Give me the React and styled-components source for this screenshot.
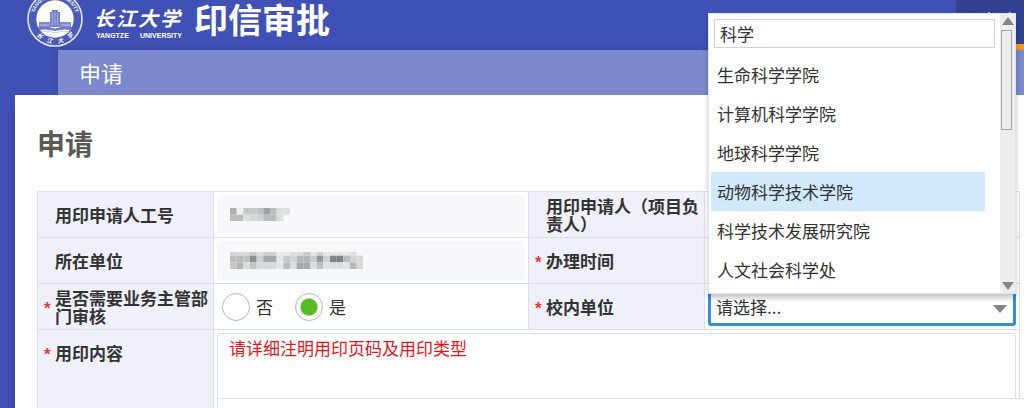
import React, { useState } from 'react'
import styled, { createGlobalStyle } from 'styled-components'

const departments = [
    '生命科学学院',
    '计算机科学学院',
    '地球科学学院',
    '动物科学技术学院',
    '科学技术发展研究院',
    '人文社会科学处',
]

// grey levels of the masked values, one array per row of blocks
const maskedId = [
    ['b0', 'f0', 'c8', 'c8', 'c0', 'a0', 'bc', 'dd', 'df'],
    ['bc', 'bc', 'de', 'd4', 'cf', 'bc', 'bc', 'dd', ''],
]

const maskedUnit = [
    ['d4', 'd8', 'd8', 'c8', 'dd', 'd0', 'd0', 'ea', 'ea', 'dc', 'dc', 'c8', 'e4', 'd0', 'e6', 'e6', 'e6', 'ec', 'e2', ''],
    ['bc', 'bc', 'c0', '90', 'd0', 'a8', 'a8', 'e4', 'c8', 'd4', 'b8', 'b8', 'cc', '98', 'd0', '84', '84', 'bc', 'd4', 'd8'],
    ['c8', 'b4', 'dc', 'c4', 'd8', 'd8', 'd8', 'e4', 'bc', 'dc', 'a8', 'a8', 'dc', 'c0', 'e0', 'dc', 'dc', 'e4', 'b8', 'd8'],
]

function Mosaic({ rows, heights }) {
    const total = heights.reduce((a, b) => a + b, 0)
    const width = rows[0].length * 20
    let y = 0
    return (
        <svg width={width / 3} height={total / 3} viewBox={`0 0 ${width} ${total}`} aria-hidden="true">
            {rows.map((row, r) => {
                const top = y
                y += heights[r]
                return row.map((c, i) => c && (
                    <rect key={`${r}-${i}`} x={i * 20} y={top} width="20" height={heights[r]} fill={`#${c}${c}${c}`} />
                ))
            })}
        </svg>
    )
}

function Seal() {
    return (
        <svg width="56" height="47" viewBox="0 9 56 47" aria-hidden="true">
            <defs>
                <path id="ringTop" d="M 6.5 31 A 21.7 21.7 0 1 1 49.5 31" />
                <path id="ringBottom" d="M 6 39 A 24.6 24.6 0 0 0 50 39" />
            </defs>
            <circle cx="28" cy="28" r="27" fill="#4a5bba" stroke="#dfe3f8" strokeWidth="1.6" />
            <circle cx="28" cy="28" r="18.7" fill="#fff" />
            <text fill="#fff" fontFamily="Liberation Sans, sans-serif" fontSize="5" fontWeight="700">
                <textPath href="#ringTop" startOffset="50%" textAnchor="middle">YANGTZE UNIVERSITY</textPath>
            </text>
            <text fill="#fff" fontFamily="Noto Sans CJK SC, sans-serif" fontSize="6" fontStyle="italic" fontWeight="700">
                <textPath href="#ringBottom" startOffset="50%" textAnchor="middle">{'长\u2002\u2002江\u2002\u2002大\u2002\u2002学'}</textPath>
            </text>
            <path d="M25 19h6v2h2v15h-10v-15h2z" fill="#7684cc" />
            <path d="M25.500 22v12M28 21v13M30.500 22v12" stroke="#a9b2e2" strokeWidth="0.8" />
            <path d="M12 31h11v6h-11zM33 31h11v6h-11z" fill="#7e8bd0" />
            <path d="M13 34h9M34 34h9" stroke="#c7cdee" strokeWidth="0.8" />
            <path d="M11 36q8.500 -1 17 1.500q8.500 -2.500 17 -1.500l-1 3q-8 -1.500 -16 1q-8 -2.500 -16 -1z" fill="#6b7ac8" />
            <path d="M14 41q7 -2 14 1q7 -3 14 -1" stroke="#bac2ea" strokeWidth="0.8" fill="none" />
        </svg>
    )
}

function Arrow({ up, size }) {
    return (
        <svg width={size} height="8" viewBox="0 0 14 8" preserveAspectRatio="none" aria-hidden="true">
            <path d={up ? 'M0 8L7 0L14 8z' : 'M0 0H14L7 8z'} fill="#868686" />
        </svg>
    )
}

function DepartmentPicker() {
    const [query, setQuery] = useState('科学')
    const [active, setActive] = useState('动物科学技术学院')

    return (
        <Picker>
            <Select id="dept" defaultValue="">
                <option value="">请选择...</option>
            </Select>
            <SelectArrow><Arrow size={14} /></SelectArrow>
            <Popup>
                <PopupBody>
                    <Search aria-label="搜索" value={query} onChange={e => setQuery(e.target.value)} />
                    <Options>
                        {departments.map(d => (
                            <li key={d}>
                                <Option type="button" $active={d === active} onClick={() => setActive(d)}>{d}</Option>
                            </li>
                        ))}
                    </Options>
                </PopupBody>
                <ScrollTrack>
                    <ScrollButton type="button" aria-label="向上"><Arrow up size={12} /></ScrollButton>
                    <ScrollThumb />
                    <ScrollButton type="button" aria-label="向下"><Arrow size={12} /></ScrollButton>
                </ScrollTrack>
            </Popup>
        </Picker>
    )
}

function FieldLabel({ children, required, top, htmlFor }) {
    return (
        <LabelCell $top={top}>
            <Star>{required && '*'}</Star>
            <label htmlFor={htmlFor}>{children}</label>
        </LabelCell>
    )
}

export default function App() {
    const [review, setReview] = useState('yes')

    return (
        <Page>
            <GlobalStyle />
            <Header>
                <Seal />
                <School>
                    <SchoolName><span>长</span><span>江</span><span>大</span><span>学</span></SchoolName>
                    <SchoolLatin><span>YANGTZE</span><span>UNIVERSITY</span></SchoolLatin>
                </School>
                <SystemName>印信审批</SystemName>
                <NavItem href="#apply">申请</NavItem>
            </Header>
            <TabBar>申请</TabBar>
            <Panel>
                <Title>申请</Title>
                <Form>
                    <Row>
                        <FieldLabel htmlFor="jobId">用印申请人工号</FieldLabel>
                        <Cell><Locked id="jobId"><Mosaic rows={maskedId} heights={[20, 20]} /></Locked></Cell>
                        <FieldLabel>用印申请人（项目负责人）</FieldLabel>
                        <Cell />
                    </Row>
                    <Row>
                        <FieldLabel htmlFor="unit">所在单位</FieldLabel>
                        <Cell><Locked id="unit"><Mosaic rows={maskedUnit} heights={[11, 20, 20]} /></Locked></Cell>
                        <FieldLabel required>办理时间</FieldLabel>
                        <Cell />
                    </Row>
                    <Row>
                        <FieldLabel required>是否需要业务主管部门审核</FieldLabel>
                        <RadioCell>
                            <RadioLabel>
                                <Radio name="review" checked={review === 'no'} onChange={() => setReview('no')} />否
                            </RadioLabel>
                            <RadioLabel>
                                <Radio name="review" checked={review === 'yes'} onChange={() => setReview('yes')} />是
                            </RadioLabel>
                        </RadioCell>
                        <FieldLabel required htmlFor="dept">校内单位</FieldLabel>
                        <Cell><DepartmentPicker /></Cell>
                    </Row>
                    <ContentRow>
                        <FieldLabel required top htmlFor="content">用印内容</FieldLabel>
                        <ContentCell>
                            <Content id="content" defaultValue="请详细注明用印页码及用印类型" />
                            <ContentFoot />
                        </ContentCell>
                    </ContentRow>
                </Form>
            </Panel>
        </Page>
    )
}

const GlobalStyle = createGlobalStyle`
    * {
        box-sizing: border-box;
    }

    body {
        margin: 0;
        overflow-x: hidden;
        font-family: "Noto Sans CJK SC", sans-serif;
        font-size: 17px;
        color: #333;
    }

    input, select, textarea, button {
        font: inherit;
        color: inherit;
    }
`

const Page = styled.div`
    display: flex;
    flex-direction: column;
    min-height: 100vh;
    background: #3f51b5;
`

const Header = styled.header`
    display: flex;
    align-items: flex-start;
    height: 50px;
    padding-left: 27px;
`

const School = styled.div`
    width: 90px;
    margin-left: 11px;
    color: #fff;
`

const SchoolName = styled.div`
    display: flex;
    justify-content: space-between;
    padding: 4px 4px 0 0;
    font-size: 20px;
    font-style: italic;
    font-weight: 700;
    line-height: 28px;
`

const SchoolLatin = styled.div`
    display: flex;
    justify-content: space-between;
    padding: 0 2px;
    font-family: "Liberation Sans", sans-serif;
    font-size: 7px;
    font-weight: 700;
    line-height: 8px;
`

const SystemName = styled.div`
    margin-left: 10px;
    color: #fff;
    font-size: 34px;
    font-weight: 700;
    line-height: 38px;
`

const NavItem = styled.a`
    width: 68px;
    height: 50px;
    margin-left: auto;
    padding-left: 24px;
    border-bottom: 6px solid #f5a01d;
    background: #32418f;
    color: #fff;
    font-size: 18px;
    line-height: 40px;
    text-decoration: none;
`

const TabBar = styled.div`
    height: 45px;
    margin-left: 58px;
    padding-left: 21px;
    background: #7b88cb;
    box-shadow: 0 0 8px rgba(0, 0, 0, 0.16);
    color: #fff;
    font-size: 22px;
    line-height: 44px;
`

const Panel = styled.main`
    position: relative;
    display: flex;
    flex: 1;
    flex-direction: column;
    margin-left: 15px;
    padding: 0 4px 0 22px;
    background: #fff;
    box-shadow: 0 6px 8px rgba(0, 0, 0, 0.2);
`

const Title = styled.h1`
    margin: 0;
    color: #595959;
    font-size: 28px;
    font-weight: 700;
    line-height: 96px;
`

const Form = styled.form`
    display: flex;
    flex: 1;
    flex-direction: column;
    border: 1px solid #dcdeea;
    border-bottom: 0;
`

const Row = styled.div`
    display: grid;
    grid-template-columns: 176px 1fr 177px 1fr;
    height: 46px;
    border-bottom: 1px solid #dcdeea;
`

const ContentRow = styled(Row)`
    flex: 1;
    grid-template-columns: 176px 1fr;
    height: auto;
    border-bottom: 0;
`

const LabelCell = styled.div`
    display: flex;
    align-items: ${props => props.$top ? 'flex-start' : 'center'};
    padding: ${props => props.$top ? '14px' : '0'} 4px 0 6px;
    border-right: 1px solid #dcdeea;
    background: #eff0fa;
    font-weight: 700;
    line-height: 18px;

    &:nth-child(3) {
        border-left: 1px solid #dcdeea;
    }
`

const Star = styled.span`
    flex: 0 0 11px;
    height: 18px;
    color: #e5393c;
    font-family: "Liberation Sans", sans-serif;
    font-size: 17px;
    font-weight: 700;
    line-height: 22px;
`

const Cell = styled.div`
    padding: 3px;
`

const Locked = styled.output`
    display: flex;
    align-items: center;
    height: 39px;
    padding-left: 13px;
    border-radius: 3px;
    background: #f7f8fc;
`

const RadioCell = styled(Cell)`
    display: flex;
    align-items: center;
    gap: 22px;
    padding-left: 8px;
`

const RadioLabel = styled.label`
    display: flex;
    align-items: center;
    gap: 6px;
`

const Radio = styled.input.attrs({ type: 'radio' })`
    appearance: none;
    width: 28px;
    height: 28px;
    margin: 0;
    border: 1px solid #b9b3bd;
    border-radius: 50%;
    background: #fff;

    &:checked {
        background: radial-gradient(circle, #57bb22 8px, #fff 9px);
    }
`

const Picker = styled.div`
    position: relative;
`

const Select = styled.select`
    display: block;
    appearance: none;
    width: 100%;
    height: 39px;
    padding: 0 5px;
    border: 3px solid #2f91df;
    border-radius: 3px;
    background: #fff;
    outline: none;
`

const SelectArrow = styled.span`
    position: absolute;
    top: 18px;
    right: 9px;
    display: flex;
    pointer-events: none;
`

const Popup = styled.div`
    position: absolute;
    right: 0;
    bottom: 32px;
    left: 0;
    z-index: 2;
    display: flex;
    border: 1px solid #e2e4ee;
    background: #fff;
    box-shadow: 0 4px 5px rgba(0, 0, 0, 0.22);
`

const PopupBody = styled.div`
    flex: 1;
    padding: 5px 5px 4px 2px;
`

const Search = styled.input`
    display: block;
    width: calc(100% - 3px);
    height: 29px;
    margin-left: 3px;
    padding: 0 5px 1px;
    border: 1px solid #cdd0e8;
    background: #fff;
    outline: none;
`

const Options = styled.ul`
    margin: 7px 10px 0 0;
    padding: 0;
    list-style: none;
`

const Option = styled.button`
    display: block;
    width: 100%;
    height: 39px;
    padding: 0 6px;
    border: 0;
    background: ${props => props.$active ? '#d2e8fb' : 'transparent'};
    text-align: left;
`

const ScrollTrack = styled.div`
    display: flex;
    flex-direction: column;
    width: 15px;
    background: #ededed;
`

const ScrollButton = styled.button`
    display: flex;
    align-items: center;
    justify-content: center;
    width: 100%;
    height: 14px;
    padding: 0;
    border: 0;
    background: transparent;

    &:last-child {
        margin-top: auto;
    }
`

const ScrollThumb = styled.div`
    height: 100px;
    margin: 2px 3px 0 1px;
    border: 1px solid #a3a3a3;
    background: #ececec;
`

const ContentCell = styled.div`
    display: flex;
    flex-direction: column;
    padding: 3px 0 0 3px;
`

const Content = styled.textarea`
    display: block;
    width: calc(100% - 3px);
    height: 65px;
    padding: 2px 11px;
    border: 1px solid #dcdeea;
    border-bottom: 0;
    border-radius: 3px 3px 0 0;
    background: #fff;
    color: #e8141c;
    line-height: 24px;
    outline: none;
    resize: none;
`

const ContentFoot = styled.div`
    flex: 1;
    margin-right: -5px;
    border-top: 1px solid #e2e3ea;
    border-left: 1px solid #dcdeea;
    background: #fff;
`
